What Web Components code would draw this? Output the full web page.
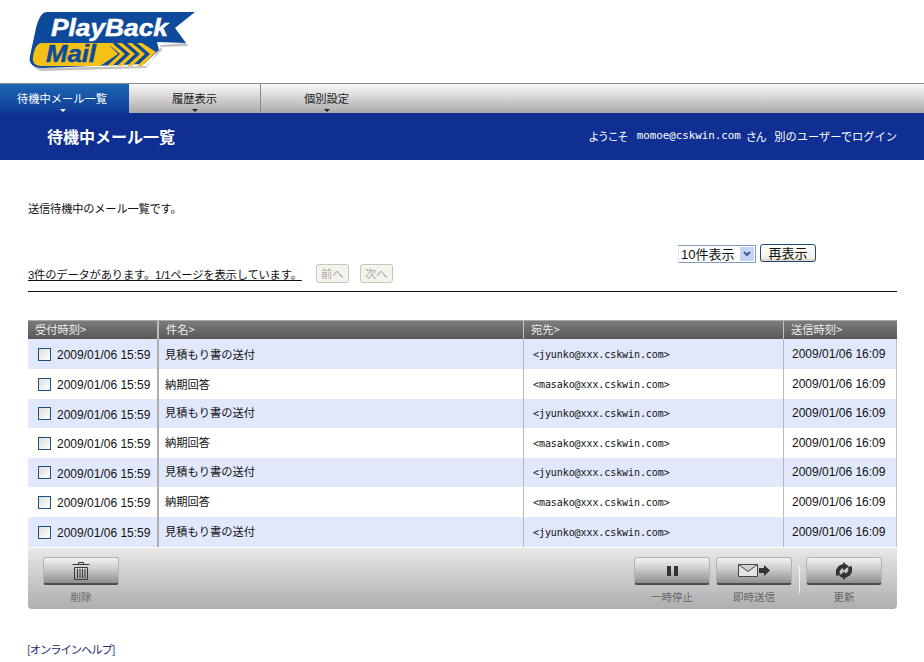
<!DOCTYPE html>
<html lang="ja">
<head>
<meta charset="utf-8">
<title>待機中メール一覧</title>
<style>
	html, body { margin: 0; padding: 0; background: #fff; }
	body { font: 11.25px/14px "Liberation Sans", "Noto Sans CJK JP", sans-serif; color: #111; }
	main { display: block; padding: 0 27px 0 28px; }
</style>
</head>
<body>
<pb-logo></pb-logo>
<pb-nav>
	<pb-tab active>待機中メール一覧</pb-tab>
	<pb-tab>履歴表示</pb-tab>
	<pb-tab>個別設定</pb-tab>
</pb-nav>
<pb-title heading="待機中メール一覧"><span>ようこそ</span><b>momoe@cskwin.com</b><span>さん</span><span class="last">別のユーザーでログイン</span></pb-title>
<main>
	<pb-intro>送信待機中のメール一覧です。</pb-intro>
	<pb-pager count="3件のデータがあります。1/1ページを表示しています。"></pb-pager>
	<mail-table>
		<mail-row date="2009/01/06 15:59" subject="見積もり書の送付" to="&lt;jyunko@xxx.cskwin.com&gt;" sent="2009/01/06 16:09" shade h="30"></mail-row>
		<mail-row date="2009/01/06 15:59" subject="納期回答" to="&lt;masako@xxx.cskwin.com&gt;" sent="2009/01/06 16:09" h="30"></mail-row>
		<mail-row date="2009/01/06 15:59" subject="見積もり書の送付" to="&lt;jyunko@xxx.cskwin.com&gt;" sent="2009/01/06 16:09" shade lift h="29"></mail-row>
		<mail-row date="2009/01/06 15:59" subject="納期回答" to="&lt;masako@xxx.cskwin.com&gt;" sent="2009/01/06 16:09" lift h="30"></mail-row>
		<mail-row date="2009/01/06 15:59" subject="見積もり書の送付" to="&lt;jyunko@xxx.cskwin.com&gt;" sent="2009/01/06 16:09" shade lift h="29"></mail-row>
		<mail-row date="2009/01/06 15:59" subject="納期回答" to="&lt;masako@xxx.cskwin.com&gt;" sent="2009/01/06 16:09" lift h="30"></mail-row>
		<mail-row date="2009/01/06 15:59" subject="見積もり書の送付" to="&lt;jyunko@xxx.cskwin.com&gt;" sent="2009/01/06 16:09" shade lift h="30"></mail-row>
	</mail-table>
	<pb-toolbar>
		<pb-tool label="削除">
			<svg width="18" height="18" viewBox="0 0 18 18" fill="none" stroke="#3a3a3a" stroke-width="1"><path d="M6.5 2.5V.5h5v2M.5 2.5h17M2.5 5.5h13v12h-13zM5.5 7v9M8 7v9M10.5 7v9M13 7v9"/></svg>
		</pb-tool>
		<pb-spacer></pb-spacer>
		<pb-tool label="一時停止">
			<svg width="11" height="10" viewBox="0 0 11 10" fill="#333"><rect width="4" height="10"/><rect x="7" width="4" height="10"/></svg>
		</pb-tool>
		<pb-tool label="即時送信">
			<svg width="33" height="13" viewBox="0 0 33 13"><path d="M.5.5h19v12H.5zM.5.5l9.5 7 9.5-7" fill="#e4e4e4" stroke="#444"/><path d="M21 4h5V1l6 5.5-6 5.5V9h-5z" fill="#333"/></svg>
		</pb-tool>
		<pb-divider></pb-divider>
		<pb-tool label="更新">
			<svg width="16" height="18" viewBox="0 0 16 18" fill="none"><path d="M2.4 13.4C.4 9 3 4.4 8 4.2M13.6 4.6C15.6 9 13 13.6 8 13.8" stroke="#333" stroke-width="3.8"/><path d="M7 0l6 4.4L7 8.4zM9 9.6L3 13.6 9 18z" fill="#333"/></svg>
		</pb-tool>
	</pb-toolbar>
	<pb-help>[オンラインヘルプ]</pb-help>
</main>

<script>
	function register(name, html, init) {
		let template = document.createElement("template");
		template.innerHTML = html;
		customElements.define(name, class extends HTMLElement {
			constructor() {
				super();
				this._shadowRoot = this.attachShadow({mode: "open"});
				this._shadowRoot.appendChild(template.content.cloneNode(true));
			}
			connectedCallback() {
				if (init) init(this, this._shadowRoot);
			}
		});
	}

	register("pb-logo", `
		<style>
			:host { display: block; height: 83px; }
			svg { display: block; }
			text { font-family: "Liberation Sans", Arial, sans-serif; font-weight: 700; font-style: italic; }
		</style>
		<svg width="220" height="83" viewBox="0 0 220 83">
			<path d="M34 60L40 68L146 66L162 50L160 45L186 43L188 46L161 47L146 68L42 71Q34 70 32 62Z" fill="#8f8f8f" opacity=".55"/>
			<path d="M47 12H195L175 28L186 43L157 42L159 50L144 64L42 68C34 68 28 64 30 56L36 28Q40 12 47 12Z" fill="#0e4a9b"/>
			<path d="M42 43H114L110 46L118 54L100 66H41C35 66 32 62 33 57C34 49 37 43 42 43Z" fill="#f6c117"/>
			<g fill="#f6c117">
				<path d="M107 43h5l13 11-13 12h-5l13-12z"/>
				<path d="M117 43h5l13 11-13 12h-5l13-12z"/>
				<path d="M127 43h5l13 11-13 12h-5l13-12z"/>
				<path d="M137 43h5l14 9-14 14h-5l13-12z"/>
			</g>
			<text x="51" y="36" font-size="24" fill="#fff" stroke="#fff" stroke-width=".5" textLength="117" lengthAdjust="spacingAndGlyphs">PlayBack</text>
			<text x="46" y="62" font-size="24" fill="#0e4a9b" stroke="#0e4a9b" stroke-width=".5" textLength="50" lengthAdjust="spacingAndGlyphs">Mail</text>
		</svg>
	`);

	register("pb-nav", `
		<style>
			:host {
				display: flex;
				height: 29px;
				border-top: 1px solid #8a8a8a;
				background: linear-gradient(#f8f8f8, #e6e6e6 25%, #a9a9a9);
			}
		</style>
		<slot></slot>
	`);

	register("pb-tab", `
		<style>
			:host {
				display: block;
				position: relative;
				width: 131px;
				border-right: 1px solid #8a8a8a;
				text-align: center;
				line-height: 28px;
				color: #222;
				font-size: 11.25px;
				font-family: "Noto Sans CJK JP", sans-serif;
			}
			:host([active]) {
				box-sizing: border-box;
				width: 129px;
				padding-right: 5px;
				border-right: 0;
				color: #fff;
				background: linear-gradient(#1d66b3, #0d3b95);
			}
			:host(:last-child) { border-right: 0; }
			.arrow {
				position: absolute;
				left: 50%;
				bottom: 1px;
				margin-left: -3px;
				border: 3px solid transparent;
				border-bottom: 0;
				border-top-color: currentColor;
			}
			:host([active]) .arrow { margin-left: -5px; }
		</style>
		<slot></slot><span class="arrow"></span>
	`);

	register("pb-title", `
		<style>
			:host {
				display: flex;
				justify-content: space-between;
				align-items: center;
				height: 47px;
				padding: 0 27px 2px 47px;
				box-sizing: border-box;
				background: #0f2f92;
				color: #fff;
				font: 11.25px/14px "Noto Sans CJK JP", sans-serif;
			}
			h1 { margin: 0; font-size: 16px; font-weight: 700; line-height: 20px; }
			.right { display: flex; align-items: center; }
			::slotted(span) { letter-spacing: -1.6px; }
			::slotted(span.last) { letter-spacing: 0; margin-left: 9px; }
			::slotted(b) { font: 400 10.8px "DejaVu Sans Mono", monospace; margin: 0 5px 0 10px; }
		</style>
		<h1></h1><div class="right"><slot></slot></div>
	`, function(host, root) {
		root.querySelector("h1").textContent = host.getAttribute("heading");
	});

	register("pb-intro", `
		<style>
			:host { display: block; padding-top: 41px; font: 11.25px/14px "Noto Sans CJK JP", sans-serif; letter-spacing: -.2px; color: #111; }
		</style>
		<slot></slot>
	`);

	register("pb-button", `
		<style>
			:host {
				display: inline-block;
				box-sizing: border-box;
				height: 18px;
				border: 1px solid #1f4a78;
				border-radius: 3px;
				background: linear-gradient(#fff, #f3f1e6 80%, #d8d4c0);
				text-align: center;
				font: 13px/15px "Noto Sans CJK JP", sans-serif;
				color: #111;
			}
			:host([disabled]) { height: 19px; border-color: #c9c7ba; color: #aaa; font-size: 11.25px; line-height: 16px; background: #f4f3ec; }
		</style>
		<slot></slot>
	`);

	register("pb-select", `
		<style>
			:host {
				display: inline-flex;
				align-items: center;
				justify-content: space-between;
				box-sizing: border-box;
				height: 18px;
				padding: 1px 1px 1px 2px;
				border: 1px solid #7f9db9;
				border-left-color: #dfe7ee;
				background: #fff;
				font: 13px/15px "Liberation Sans", "Noto Sans CJK JP", sans-serif;
				color: #111;
			}
			.drop { display: flex; align-items: center; justify-content: center; width: 14px; height: 14px; background: #c4d4f2; border-radius: 1px; }
			svg { display: block; }
		</style>
		<slot></slot>
		<span class="drop"><svg width="8" height="6" viewBox="0 0 8 6" fill="none" stroke="#3a5a9c" stroke-width="2"><path d="M1 1l3 3 3-3"/></svg></span>
	`);

	register("pb-pager", `
		<style>
			:host { display: block; box-sizing: border-box; height: 77px; padding-top: 30px; border-bottom: 1px solid #111; }
			.view { display: flex; justify-content: flex-end; align-items: flex-start; gap: 4px; padding-right: 81px; }
			.view pb-select { width: 78px; }
			.view pb-button { width: 56px; margin-top: -1px; }
			.rows { display: flex; align-items: flex-start; margin-top: 1px; }
			.count { display: block; text-decoration: underline; margin-top: 4px; letter-spacing: -.15px; font: 11.25px/14px "Liberation Sans", "Noto Sans CJK JP", sans-serif; }
			.rows pb-button { width: 33px; }
			.rows pb-button.first { margin-left: 14px; }
			.rows pb-button.second { margin-left: 11px; }
		</style>
		<div class="view"><pb-select>10件表示</pb-select><pb-button>再表示</pb-button></div>
		<div class="rows">
			<span class="count"></span>
			<pb-button class="first" disabled>前へ</pb-button>
			<pb-button class="second" disabled>次へ</pb-button>
		</div>
	`, function(host, root) {
		root.querySelector(".count").textContent = host.getAttribute("count");
	});

	register("mail-table", `
		<style>
			:host { display: block; margin-top: 28px; }
			.head {
				display: grid;
				grid-template-columns: 130px 365px 260px 114px;
				height: 19px;
				box-sizing: border-box;
				border-top: 1px solid #a8a8a8;
				background: linear-gradient(#7c7c7c, #585858);
				color: #eee;
				font: 11.25px/17px "Noto Sans CJK JP", sans-serif;
			}
			.head div { padding-left: 7px; border-left: 1px solid #c4c4c4; box-sizing: border-box; }
			.head div:first-child { border-left: 0; }
			.head div:nth-child(2) { border-left: 2px solid #bdbdbd; margin-left: -1px; }
		</style>
		<div class="head"><div>受付時刻&gt;</div><div>件名&gt;</div><div>宛先&gt;</div><div>送信時刻&gt;</div></div>
		<slot></slot>
	`);

	register("mail-row", `
		<style>
			:host {
				display: grid;
				grid-template-columns: 130px 365px 260px 113px;
				box-sizing: border-box;
				background: #fff;
				border-right: 1px solid #c0c0c0;
				color: #111;
			}
			:host([shade]) { background: #e1e8fb; }
			.cell { display: flex; align-items: center; padding-left: 7px; box-sizing: border-box; border-left: 1px solid #b8b8b8; }
			.cell.check { border-left: 0; padding-left: 10px; }
			.cell.subject { padding-left: 6px; border-left: 2px solid #aeaeae; margin-left: -1px; font: 11.25px "Noto Sans CJK JP", sans-serif; }
			:host([lift]) .cell.subject { padding-bottom: 3px; }
			.cell.to { padding-left: 9px; letter-spacing: -.08px; font: 10px "DejaVu Sans Mono", monospace; }
			.cell.sent { padding-left: 8px; padding-bottom: 1px; font: 12px "Liberation Sans", sans-serif; }
			.date { font: 12px "Liberation Sans", sans-serif; margin-left: 6px; padding-top: 2px; white-space: nowrap; }
			input {
				appearance: none;
				width: 13px;
				height: 13px;
				margin: 0;
				box-sizing: border-box;
				border: 1px solid #1c5180;
				background: linear-gradient(135deg, #dcdcd7, #ffffff);
			}
		</style>
		<div class="cell check"><input type="checkbox"><span class="date"></span></div>
		<div class="cell subject"></div>
		<div class="cell to"></div>
		<div class="cell sent"></div>
	`, function(host, root) {
		host.style.height = host.getAttribute("h") + "px";
		root.querySelector(".date").textContent = host.getAttribute("date");
		root.querySelector(".subject").textContent = host.getAttribute("subject");
		root.querySelector(".to").textContent = host.getAttribute("to");
		root.querySelector(".sent").textContent = host.getAttribute("sent");
	});

	register("pb-toolbar", `
		<style>
			:host {
				display: flex;
				gap: 6px;
				box-sizing: border-box;
				height: 62px;
				padding: 9px 15px 0;
				border-top: 1px solid #fff;
				border-radius: 0 0 4px 4px;
				background: linear-gradient(#e8e8e8, #d6d6d6 30%, #aeaeae);
			}
			::slotted(pb-spacer) { flex: 1; }
		</style>
		<slot></slot>
	`);

	register("pb-spacer", `<style>:host { display: block; }</style>`);

	register("pb-divider", `
		<style>
			:host { display: block; width: 1px; height: 27px; margin: 9px 0 0 1px; background: #f2f2f2; }
		</style>
	`);

	register("pb-tool", `
		<style>
			:host { display: block; width: 76px; text-align: center; }
			.face {
				display: flex;
				align-items: center;
				justify-content: center;
				box-sizing: border-box;
				height: 28px;
				border: 1px solid #b4b4b4;
				border-bottom: 2px solid #4c4c4c;
				border-radius: 3px;
				background: linear-gradient(#f2f2f2, #cfcfcf 40%, #8f8f8f);
			}
			.label { display: block; margin-top: 5px; font: 10.5px/14px "Noto Sans CJK JP", sans-serif; color: #666; }
		</style>
		<div class="face"><slot></slot></div>
		<span class="label"></span>
	`, function(host, root) {
		root.querySelector(".label").textContent = host.getAttribute("label");
	});

	register("pb-help", `
		<style>
			:host { display: block; margin: 33px 0 0 -1px; letter-spacing: -1px; font: 11.25px/14px "Noto Sans CJK JP", sans-serif; color: #1a2c6e; }
		</style>
		<slot></slot>
	`);
</script>
</body>
</html>
